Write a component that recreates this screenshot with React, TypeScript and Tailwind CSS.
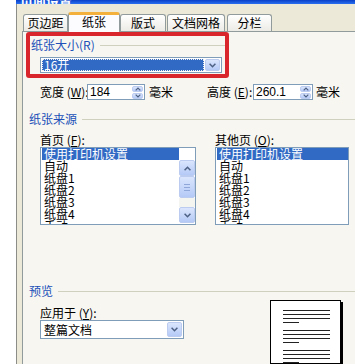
import React from 'react';

const Chevron = ({ up = false, size = 9 }: { up?: boolean; size?: number }) => (
  <svg width={size} height={Math.round(size * 0.6)} viewBox="0 0 9 6">
    <path
      d={up ? 'M1 5 L4.5 1.5 L8 5' : 'M1 1 L4.5 4.5 L8 1'}
      stroke="#4d6185"
      strokeWidth="1.8"
      fill="none"
    />
  </svg>
);

function XpButton({ children, className = '' }: { children?: React.ReactNode; className?: string }) {
  return (
    <div
      className={`flex items-center justify-center rounded-[2px] border border-[#bccbf0] bg-gradient-to-b from-[#dbe6fd] to-[#b4c9f6] ${className}`}
    >
      {children}
    </div>
  );
}

function GroupLabel({ text, className = '' }: { text: string; className?: string }) {
  return (
    <div className={`flex items-center h-[14px] ${className}`}>
      <span className="text-[#2050b8] leading-[14px]">{text}</span>
      <div className="flex-1 ml-[5px] border-t border-[#d0d0bf]" />
    </div>
  );
}

function Mnemonic({ label, letter }: { label: string; letter: string }) {
  return (
    <span className="leading-[14px] whitespace-nowrap">
      {label}(<span className="underline">{letter}</span>):
    </span>
  );
}

function SpinInput({ value, width }: { value: string; width: string }) {
  return (
    <div className={`flex h-[16px] border border-[#7f9db9] bg-white ${width}`}>
      <span className="flex-1 pl-[2px] leading-[14px] font-['Liberation_Sans',sans-serif] text-[12px]">
        {value}
      </span>
      <div className="w-[13px] flex flex-col gap-px p-px">
        <XpButton className="flex-1">
          <Chevron up size={6} />
        </XpButton>
        <XpButton className="flex-1">
          <Chevron size={6} />
        </XpButton>
      </div>
    </div>
  );
}

const trays = ['自动', '纸盘1', '纸盘2', '纸盘3', '纸盘4', '手动'];

function ListBox({ width, scroll }: { width: string; scroll?: boolean }) {
  return (
    <div className={`flex h-[78px] border border-[#7f9db9] bg-white overflow-hidden ${width}`}>
      <div className="flex-1 flex flex-col pl-px">
        <div className="h-[12px] leading-[12px] bg-[#316ac5] text-white pl-[2px] whitespace-nowrap">
          使用打印机设置
        </div>
        {trays.map((t) => (
          <div key={t} className="h-[12px] leading-[12px] pl-[2px] shrink-0">
            {t}
          </div>
        ))}
      </div>
      {scroll && (
        <div className="w-[16px] flex flex-col pt-[12px] pb-px">
          <XpButton className="h-[16px]">
            <Chevron up />
          </XpButton>
          <XpButton className="h-[22px] flex-col gap-[2px]">
            <div className="w-[6px] border-t border-[#8ea6d8]" />
            <div className="w-[6px] border-t border-[#8ea6d8]" />
            <div className="w-[6px] border-t border-[#8ea6d8]" />
          </XpButton>
          <div className="flex-1 bg-[#f4f4f0]" />
          <XpButton className="h-[16px]">
            <Chevron />
          </XpButton>
        </div>
      )}
    </div>
  );
}

function Tab({ label, width, selected, className = '' }: { label: string; width: string; selected?: boolean; className?: string }) {
  if (selected) {
    return (
      <div
        className={`relative z-10 -mb-px h-[20px] rounded-t-[3px] border-x border-[#919b9c] border-t-[3px] border-t-[#f3b13c] bg-[#fcfcfe] text-center leading-[14px] ${width} ${className}`}
      >
        {label}
      </div>
    );
  }
  return (
    <div
      className={`h-[17px] rounded-t-[3px] border-x border-t border-[#919b9c] bg-gradient-to-b from-white to-[#ecebe6] text-center leading-[16px] ${width} ${className}`}
    >
      {label}
    </div>
  );
}

export default function App() {
  return (
    <div className="w-[355px] h-[364px] overflow-hidden bg-white flex font-['Noto_Sans_CJK_SC',sans-serif] text-[12px] text-black">
      <div className="w-[16px] shrink-0" />
      <div className="flex-1 flex flex-col">
        <div className="h-[13px] overflow-hidden bg-gradient-to-b from-[#0a3fc8] to-[#2a6ff0] pl-[4px]">
          <div className="-mt-[6px] text-[13px] leading-[14px] font-bold text-white">页面设置</div>
        </div>
        <div className="flex-1 flex flex-col border-l border-[#8c8c88] bg-[#ece9d8] pl-[5px]">
          <div className="h-[27px] flex items-end pl-px">
            <Tab label="页边距" width="w-[45px]" />
            <Tab label="纸张" width="w-[52px]" selected />
            <Tab label="版式" width="w-[46px]" />
            <Tab label="文档网格" width="w-[58px]" className="ml-px" />
            <Tab label="分栏" width="w-[45px]" className="ml-[2px]" />
          </div>
          <div className="flex-1 flex flex-col border-t border-l border-[#919b9c] bg-[#f7f6f1]">
            <div className="ml-[3px] w-[203px] h-[46px] border-4 border-[#d8262c] rounded-[3px] flex flex-col">
              <GroupLabel text="纸张大小(R)" className="mt-[2px] pl-px" />
              <div className="mt-[5px] ml-[10px] w-[182px] h-[16px] flex border border-[#7f9db9] bg-white p-px">
                <div className="flex-1 bg-[#316ac5] text-white leading-[12px] pl-[2px] outline-1 outline-dotted outline-[#f0f0f0] -outline-offset-1">
                  16开
                </div>
                <XpButton className="w-[15px] ml-px">
                  <Chevron />
                </XpButton>
              </div>
            </div>

            <div className="mt-[6px] flex items-center h-[16px]">
              <div className="w-[184px] pl-[17px] flex items-center">
                <div className="w-[47px]">
                  <Mnemonic label="宽度 " letter="W" />
                </div>
                <SpinInput value="184" width="w-[58px]" />
                <span className="ml-[4px]">毫米</span>
              </div>
              <div className="flex items-center">
                <div className="w-[46px]">
                  <Mnemonic label="高度 " letter="E" />
                </div>
                <SpinInput value="260.1" width="w-[60px]" />
                <span className="ml-[3px]">毫米</span>
              </div>
            </div>

            <GroupLabel text="纸张来源" className="mt-[12px] pl-[6px]" />

            <div className="mt-[5px] flex pl-[17px] gap-[19px]">
              <div className="flex flex-col">
                <div className="h-[14px]">
                  <Mnemonic label="首页 " letter="F" />
                </div>
                <div className="mt-[2px]">
                  <ListBox width="w-[156px]" scroll />
                </div>
              </div>
              <div className="flex flex-col">
                <div className="h-[14px]">
                  <Mnemonic label="其他页 " letter="O" />
                </div>
                <div className="mt-[2px]">
                  <ListBox width="w-[134px]" />
                </div>
              </div>
            </div>

            <GroupLabel text="预览" className="mt-[59px] pl-[6px]" />

            <div className="flex">
              <div className="ml-[17px] w-[144px] flex flex-col">
                <div className="mt-[6px] h-[14px]">
                  <Mnemonic label="应用于 " letter="Y" />
                </div>
                <div className="mt-[2px] h-[19px] flex border border-[#7f9db9] bg-white p-px">
                  <span className="flex-1 pl-[2px] leading-[15px]">整篇文档</span>
                  <XpButton className="w-[15px]">
                    <Chevron />
                  </XpButton>
                </div>
              </div>
              <div className="ml-[86px] mt-[2px] w-[71px] h-[64px] border border-black bg-white shadow-[2px_2px_0_#000] pl-[12px] pt-[9px] flex flex-col">
                {[0, 1, 2].map((p) => (
                  <div key={p} className="flex flex-col gap-[3px] mb-[7px]">
                    <div className="w-[47px] border-t border-[#222]" />
                    <div className="w-[47px] border-t border-[#222]" />
                    <div className="w-[47px] border-t border-[#222]" />
                    <div className="w-[16px] border-t border-[#222]" />
                  </div>
                ))}
              </div>
            </div>
          </div>
        </div>
      </div>
    </div>
  );
}
